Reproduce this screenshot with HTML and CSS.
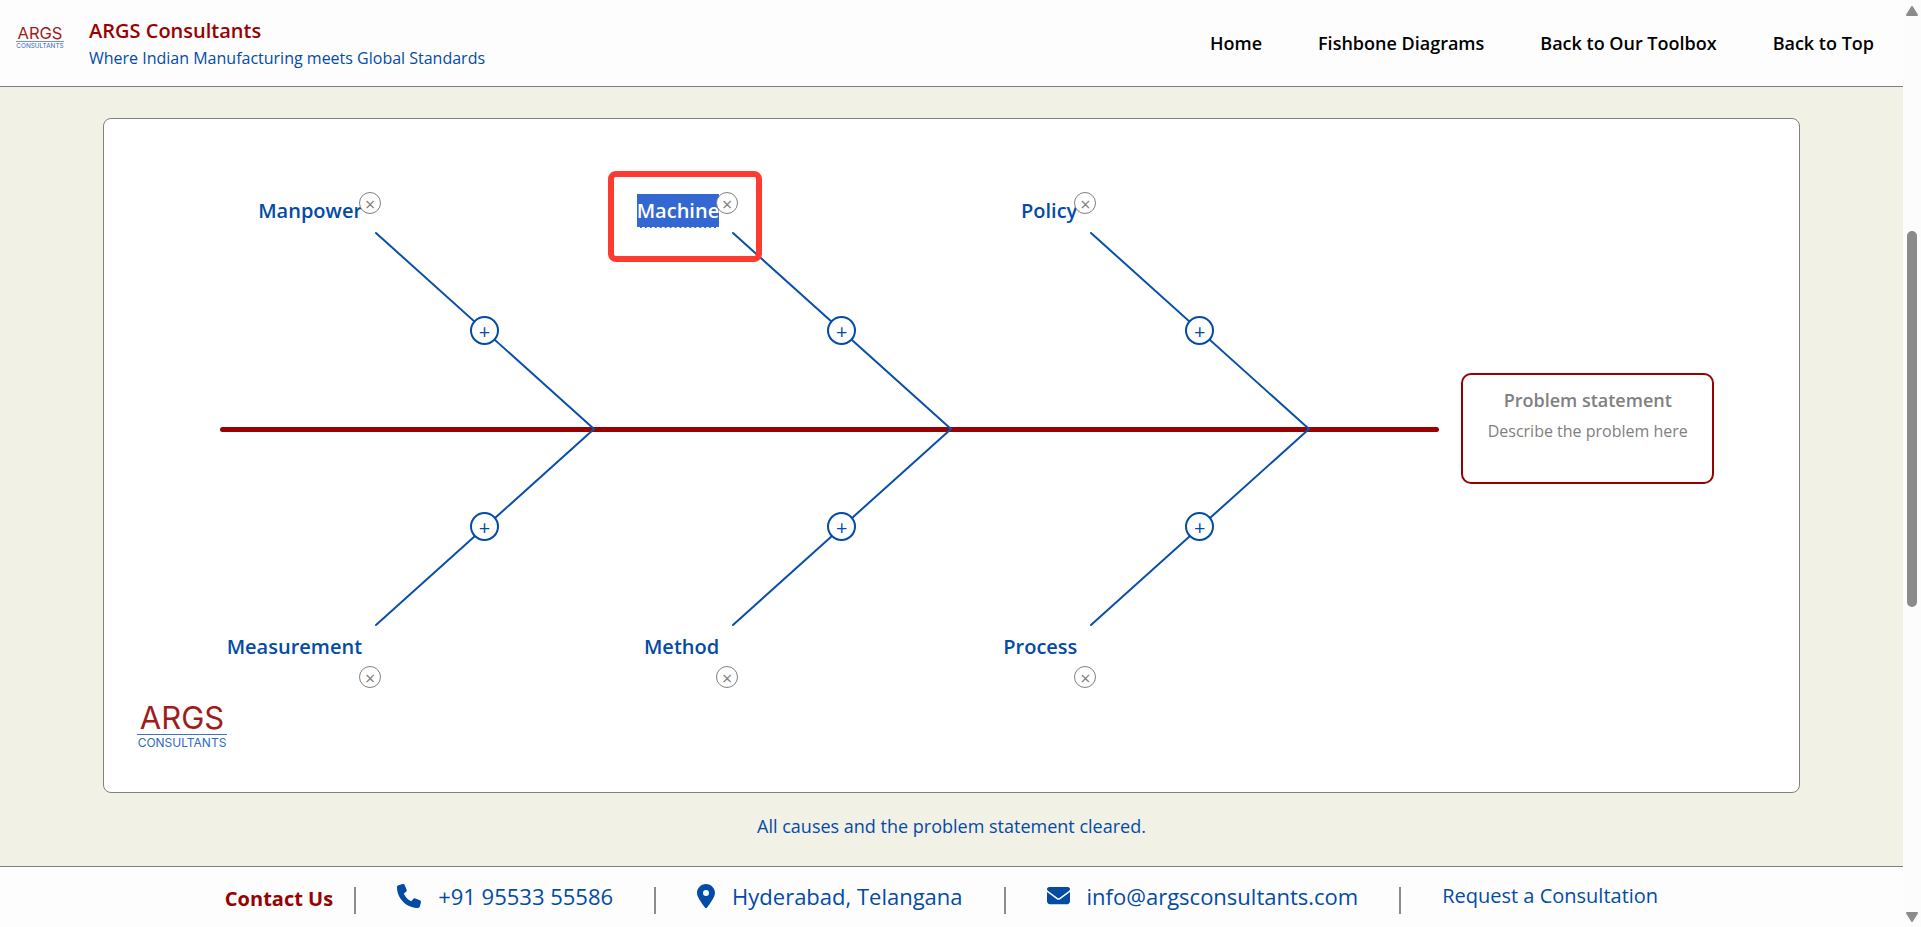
FILE: index.html
```html
<!DOCTYPE html>
<html lang="en">
<head>
    <meta charset="UTF-8">
    <meta name="viewport" content="width=device-width, initial-scale=1.0">
    <title>Fishbone Diagram - ARGS Consultants</title>
    <link rel="stylesheet" href="styles.css">
</head>
<body>
    <div class="page">
        <header class="header">
            <a class="brand" href="#">
                <svg class="brand-logo" viewBox="0 -10 90 60" role="img" aria-label="ARGS Consultants logo">
                    <text class="logo-name" x="45" y="21" text-anchor="middle">ARGS</text>
                    <path d="M0 26.500H90" stroke="#3c73c0" stroke-width="1.500"/>
                    <text class="logo-sub" x="45" y="39" text-anchor="middle">CONSULTANTS</text>
                </svg>
                <span class="brand-text">
                    <span class="brand-name">ARGS Consultants</span>
                    <span class="brand-tagline">Where Indian Manufacturing meets Global Standards</span>
                </span>
            </a>
            <nav class="nav">
                <a href="#">Home</a>
                <a href="#">Fishbone Diagrams</a>
                <a href="#">Back to Our Toolbox</a>
                <a href="#">Back to Top</a>
            </nav>
        </header>

        <main class="main">
            <section class="canvas" aria-label="Fishbone diagram">
                <div class="spine"></div>

                <div class="bone top first">
                    <svg class="bone-line" viewBox="0 0 218 196"><path d="M0 0L218 196"/></svg>
                    <span class="label" contenteditable="true" spellcheck="false">Manpower</span>
                    <button class="remove-btn" aria-label="Remove Manpower">×</button>
                    <button class="add-btn" aria-label="Add cause to Manpower">+</button>
                </div>
                <div class="bone top second">
                    <svg class="bone-line" viewBox="0 0 218 196"><path d="M0 0L218 196"/></svg>
                    <span class="label selected" contenteditable="true" spellcheck="false">Machine</span>
                    <button class="remove-btn" aria-label="Remove Machine">×</button>
                    <button class="add-btn" aria-label="Add cause to Machine">+</button>
                    <div class="highlight"></div>
                </div>
                <div class="bone top third">
                    <svg class="bone-line" viewBox="0 0 218 196"><path d="M0 0L218 196"/></svg>
                    <span class="label" contenteditable="true" spellcheck="false">Policy</span>
                    <button class="remove-btn" aria-label="Remove Policy">×</button>
                    <button class="add-btn" aria-label="Add cause to Policy">+</button>
                </div>

                <div class="bone bottom first">
                    <svg class="bone-line" viewBox="0 0 218 196"><path d="M0 196L218 0"/></svg>
                    <span class="label" contenteditable="true" spellcheck="false">Measurement</span>
                    <button class="remove-btn" aria-label="Remove Measurement">×</button>
                    <button class="add-btn" aria-label="Add cause to Measurement">+</button>
                </div>
                <div class="bone bottom second">
                    <svg class="bone-line" viewBox="0 0 218 196"><path d="M0 196L218 0"/></svg>
                    <span class="label" contenteditable="true" spellcheck="false">Method</span>
                    <button class="remove-btn" aria-label="Remove Method">×</button>
                    <button class="add-btn" aria-label="Add cause to Method">+</button>
                </div>
                <div class="bone bottom third">
                    <svg class="bone-line" viewBox="0 0 218 196"><path d="M0 196L218 0"/></svg>
                    <span class="label" contenteditable="true" spellcheck="false">Process</span>
                    <button class="remove-btn" aria-label="Remove Process">×</button>
                    <button class="add-btn" aria-label="Add cause to Process">+</button>
                </div>

                <div class="problem">
                    <input class="problem-title" type="text" placeholder="Problem statement" aria-label="Problem statement">
                    <textarea class="problem-text" rows="2" placeholder="Describe the problem here" aria-label="Problem description"></textarea>
                </div>

                <svg class="canvas-logo" viewBox="0 -10 90 60" role="img" aria-label="ARGS Consultants logo">
                    <text class="logo-name" x="45" y="21" text-anchor="middle">ARGS</text>
                    <path d="M0 26.500H90" stroke="#3c73c0" stroke-width="1"/>
                    <text class="logo-sub" x="45" y="39" text-anchor="middle">CONSULTANTS</text>
                </svg>
            </section>
            <p class="status" role="status">All causes and the problem statement cleared.</p>
        </main>

        <footer class="footer">
            <strong class="contact-title">Contact Us</strong>
            <span class="separator"></span>
            <a class="contact" href="tel:+919553355586">
                <svg width="24" height="24" viewBox="0 0 512 512"><path fill="currentColor" d="M164.900 24.600c-7.700-18.600-28-28.500-47.400-23.200l-88 24C12.100 30.200 0 46 0 64c0 247.400 200.600 448 448 448 18 0 33.800-12.100 38.600-29.500l24-88c5.300-19.400-4.600-39.700-23.200-47.400l-96-40c-16.300-6.800-35.200-2.100-46.300 11.600L304.700 368C234.300 334.700 177.300 277.700 144 207.300L193.300 167c13.700-11.200 18.400-30 11.600-46.300l-40-96z"/></svg>
                <span>+91 95533 55586</span>
            </a>
            <span class="separator"></span>
            <a class="contact" href="#">
                <svg width="18" height="24" viewBox="0 0 384 512"><path fill="currentColor" d="M215.700 499.200C267 435 384 279.400 384 192 384 86 298 0 192 0S0 86 0 192c0 87.400 117 243 168.300 307.200 12.300 15.300 35.100 15.300 47.400 0zM192 128a64 64 0 1 1 0 128 64 64 0 1 1 0-128z"/></svg>
                <span>Hyderabad, Telangana</span>
            </a>
            <span class="separator"></span>
            <a class="contact" href="mailto:info@argsconsultants.com">
                <svg width="23" height="23" viewBox="0 0 512 512"><path fill="currentColor" d="M48 64C21.500 64 0 85.500 0 112c0 15.100 7.100 29.300 19.200 38.400l217.600 163.200c11.400 8.500 27 8.500 38.400 0l217.600-163.200c12.100-9.100 19.200-23.300 19.200-38.400 0-26.500-21.500-48-48-48H48zM0 176v208c0 35.300 28.700 64 64 64h384c35.300 0 64-28.700 64-64V176L294.400 339.200c-22.800 17.100-54 17.100-76.800 0L0 176z"/></svg>
                <span>info@argsconsultants.com</span>
            </a>
            <span class="separator"></span>
            <a class="contact request" href="#">Request a Consultation</a>
        </footer>
    </div>

    <div class="scrollbar" aria-hidden="true">
        <svg width="12" height="10" viewBox="0 0 12 10"><path d="M6 1L11 9H1Z" fill="#8b8b8b" stroke="#8b8b8b" stroke-width="2" stroke-linejoin="round"/></svg>
        <div class="track"><div class="thumb"></div></div>
        <svg width="12" height="10" viewBox="0 0 12 10"><path d="M6 9L1 1H11Z" fill="#8b8b8b" stroke="#8b8b8b" stroke-width="2" stroke-linejoin="round"/></svg>
    </div>
</body>
</html>
```
FILE: styles.css
```css
* {
    box-sizing: border-box;
}
body {
    margin: 0;
    min-height: 100vh;
    display: grid;
    grid-template-columns: 1fr 18px;
    font-family: "Open Sans", "Noto Sans", sans-serif;
    background-color: #f1f1e6;
    color: #034ba5;
}
a {
    color: inherit;
    text-decoration: none;
}
button, input, textarea {
    font-family: inherit;
}
.page {
    display: flex;
    flex-direction: column;
    min-width: 0;
}

/* Header */
.header {
    display: flex;
    align-items: center;
    justify-content: space-between;
    height: 87px;
    padding: 0 29px 0 16px;
    background-color: #fdfdfd;
    border-bottom: 1px solid #808080;
}
.brand {
    display: flex;
    align-items: center;
    gap: 25px;
}
.brand-logo {
    width: 48px;
    height: 32px;
    margin-bottom: 10px;
}
.brand-text {
    display: flex;
    flex-direction: column;
    padding-top: 2px;
}
.brand-name {
    font-size: 20px;
    line-height: 28px;
    font-weight: 600;
    color: #990000;
}
.brand-tagline {
    font-size: 16px;
    line-height: 26px;
}
.nav {
    display: flex;
    gap: 56px;
    font-size: 18px;
    font-weight: 600;
    color: #000;
}
.logo-name {
    font-family: Inter, sans-serif;
    font-size: 31px;
    fill: #a01c1c;
}
.logo-sub {
    font-family: Inter, sans-serif;
    font-size: 12px;
    fill: #2f6abc;
}

/* Diagram */
.main {
    flex: 1;
    display: flex;
    flex-direction: column;
    padding: 31px 103px 0;
}
.canvas {
    position: relative;
    height: 675px;
    background-color: #fff;
    border: 1px solid #808080;
    border-radius: 8px;
}
.spine {
    position: absolute;
    left: 6.84%;
    right: 21.24%;
    top: 308px;
    height: 5px;
    border-radius: 3px;
    background-color: #990000;
}
.bone {
    position: absolute;
    width: 218px;
    height: 196px;
}
.bone.top {
    top: 114px;
}
.bone.bottom {
    top: 310px;
}
.bone.first {
    left: 16.05%;
}
.bone.second {
    left: 37.12%;
}
.bone.third {
    left: 58.25%;
}
.bone-line {
    display: block;
    width: 100%;
    height: 100%;
    overflow: visible;
    stroke: #0a50a8;
    stroke-width: 2;
    stroke-linecap: round;
}
.label {
    position: absolute;
    right: calc(100% + 14px);
    padding-top: 1px;
    font-size: 20px;
    line-height: 32px;
    font-weight: 600;
    white-space: nowrap;
    border-bottom: 1px dashed transparent;
}
.top .label {
    top: -39px;
}
.bottom .label {
    bottom: -39px;
}
.label.selected {
    color: #fff;
    background-color: #3367d1;
    border-bottom-color: #fff;
}
.remove-btn, .add-btn {
    position: absolute;
    display: flex;
    align-items: center;
    justify-content: center;
    padding: 2px 0 0;
    border-radius: 50%;
    background-color: #fff;
    cursor: pointer;
}
.remove-btn {
    left: -17px;
    width: 22px;
    height: 22px;
    border: 1px solid #808080;
    color: #808080;
    font-size: 18px;
    line-height: 18px;
}
.top .remove-btn {
    top: -41px;
}
.bottom .remove-btn {
    bottom: -63px;
}
.add-btn {
    left: 94px;
    top: 83px;
    width: 29px;
    height: 29px;
    border: 2px solid #034ba5;
    color: #034ba5;
    font-size: 20px;
    line-height: 20px;
}
.highlight {
    position: absolute;
    left: -125px;
    top: -62px;
    width: 154px;
    height: 91px;
    border: 6px solid #ff3b30;
    border-radius: 8px;
    pointer-events: none;
}
.problem {
    position: absolute;
    right: 5%;
    top: 254px;
    width: 253px;
    height: 111px;
    padding: 10px;
    display: flex;
    flex-direction: column;
    background-color: #fff;
    border: 2px solid #990000;
    border-radius: 10px;
}
.problem-title, .problem-text {
    width: 100%;
    padding: 0;
    border: none;
    outline: none;
    resize: none;
    background: none;
    text-align: center;
    line-height: 32px;
}
.problem-title {
    height: 30px;
    font-size: 18px;
    font-weight: 600;
}
.problem-text {
    font-size: 16px;
    overflow: hidden;
}
.problem ::placeholder {
    color: #808080;
    opacity: 1;
}
.canvas-logo {
    position: absolute;
    left: 33px;
    bottom: 34px;
    width: 90px;
    height: 60px;
}
.status {
    margin: 19px 0;
    font-size: 18px;
    line-height: 28px;
    text-align: center;
}

/* Footer */
.footer {
    display: flex;
    align-items: center;
    justify-content: center;
    gap: 41px;
    height: 61px;
    padding: 0 20px 0 0;
    background-color: #fdfdfd;
    border-top: 1px solid #808080;
    font-size: 22px;
    white-space: nowrap;
}
.contact-title {
    margin-right: -20px;
    padding-top: 2px;
    font-size: 20px;
    color: #990000;
}
.separator {
    width: 2px;
    height: 27px;
    margin-top: 6px;
    background-color: #8c8c90;
}
.contact {
    display: flex;
    align-items: center;
    gap: 17px;
    padding-bottom: 3px;
}
.request {
    font-size: 20px;
}

/* Scrollbar strip */
.scrollbar {
    display: flex;
    flex-direction: column;
    align-items: center;
    padding: 6px 0 5px;
    background-color: #fcfcfc;
}
.track {
    flex: 1;
    width: 10px;
}
.thumb {
    position: relative;
    top: 24%;
    height: 42%;
    border-radius: 5px;
    background-color: #8b8b8b;
}
```
